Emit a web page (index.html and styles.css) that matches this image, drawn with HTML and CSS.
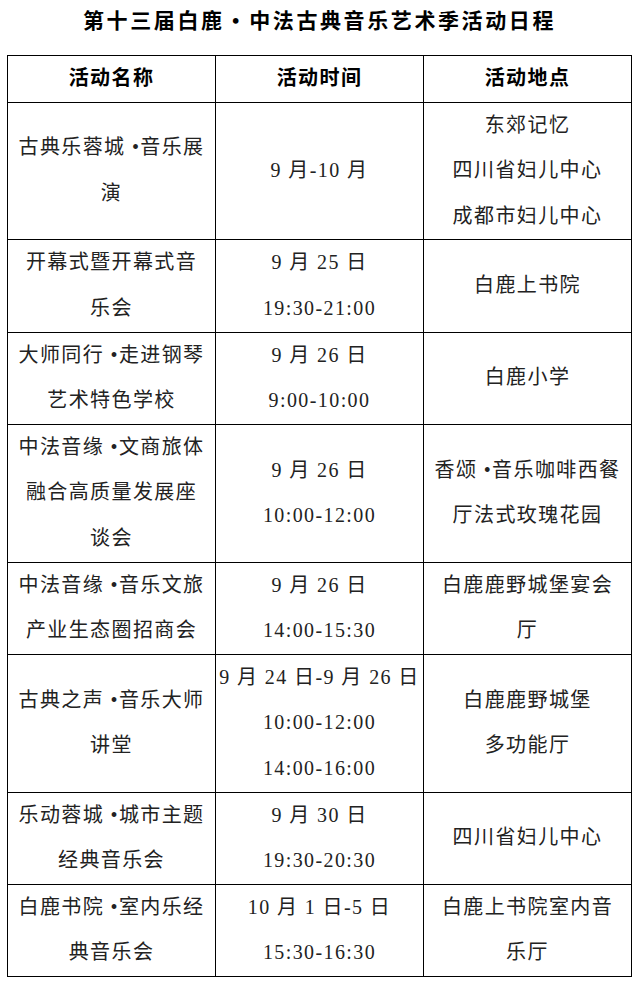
FILE: index.html
```html
<!DOCTYPE html>
<html lang="zh-CN">
<head>
<meta charset="utf-8">
<title>第十三届白鹿•中法古典音乐艺术季活动日程</title>
<link rel="stylesheet" href="styles.css">
</head>
<body>
<div class="page">
  <h1 class="title">第十三届白鹿<span class="dot">•</span>中法古典音乐艺术季活动日程</h1>
  <table class="schedule">
    <colgroup><col class="c"><col class="c"><col class="c"></colgroup>
    <thead>
      <tr><th>活动名称</th><th>活动时间</th><th>活动地点</th></tr>
    </thead>
    <tbody>
      <tr class="r3">
        <td>古典乐蓉城 •音乐展<br>演</td>
        <td>9 月-10 月</td>
        <td>东郊记忆<br>四川省妇儿中心<br>成都市妇儿中心</td>
      </tr>
      <tr class="r2">
        <td>开幕式暨开幕式音<br>乐会</td>
        <td>9 月 25 日<br>19:30-21:00</td>
        <td>白鹿上书院</td>
      </tr>
      <tr class="r2">
        <td>大师同行 •走进钢琴<br>艺术特色学校</td>
        <td>9 月 26 日<br>9:00-10:00</td>
        <td>白鹿小学</td>
      </tr>
      <tr class="r3">
        <td>中法音缘 •文商旅体<br>融合高质量发展座<br>谈会</td>
        <td>9 月 26 日<br>10:00-12:00</td>
        <td>香颂 •音乐咖啡西餐<br>厅法式玫瑰花园</td>
      </tr>
      <tr class="r2">
        <td>中法音缘 •音乐文旅<br>产业生态圈招商会</td>
        <td>9 月 26 日<br>14:00-15:30</td>
        <td>白鹿鹿野城堡宴会<br>厅</td>
      </tr>
      <tr class="r3">
        <td>古典之声 •音乐大师<br>讲堂</td>
        <td>9 月 24 日-9 月 26 日<br>10:00-12:00<br>14:00-16:00</td>
        <td>白鹿鹿野城堡<br>多功能厅</td>
      </tr>
      <tr class="r2">
        <td>乐动蓉城 •城市主题<br>经典音乐会</td>
        <td>9 月 30 日<br>19:30-20:30</td>
        <td>四川省妇儿中心</td>
      </tr>
      <tr class="r2">
        <td>白鹿书院 •室内乐经<br>典音乐会</td>
        <td>10 月 1 日-5 日<br>15:30-16:30</td>
        <td>白鹿上书院室内音<br>乐厅</td>
      </tr>
    </tbody>
  </table>
</div>
</body>
</html>
```

FILE: styles.css
```css
html, body {
  margin: 0;
  padding: 0;
  background: #ffffff;
}

.page {
  padding: 0 0 0 7px;
  font-family: "Liberation Serif", "Noto Sans CJK SC", serif;
  color: #222222;
}

.title {
  margin: 0;
  width: 625px;
  height: 55px;
  line-height: 42px;
  text-align: center;
  font-size: 21px;
  font-weight: bold;
  letter-spacing: 2.6px;
  color: #000;
}

.title .dot {
  display: inline-block;
  width: 22px;
  text-align: center;
  letter-spacing: 0;
  margin-right: 2.6px;
}

.schedule {
  border-collapse: collapse;
  width: 625px;
  table-layout: fixed;
}

.schedule .c {
  width: 208px;
}

.schedule th,
.schedule td {
  border: 1px solid #000;
  padding: 0;
  text-align: center;
  vertical-align: middle;
  white-space: nowrap;
  font-size: 20px;
  line-height: 45.6px;
  letter-spacing: 1.4px;
}

.schedule th {
  font-weight: bold;
  color: #000;
}

.schedule td {
  font-weight: normal;
}

.schedule tr.r3 td {
  height: 136.8px;
}

.schedule tr.r2 td {
  height: 91.2px;
}
```
